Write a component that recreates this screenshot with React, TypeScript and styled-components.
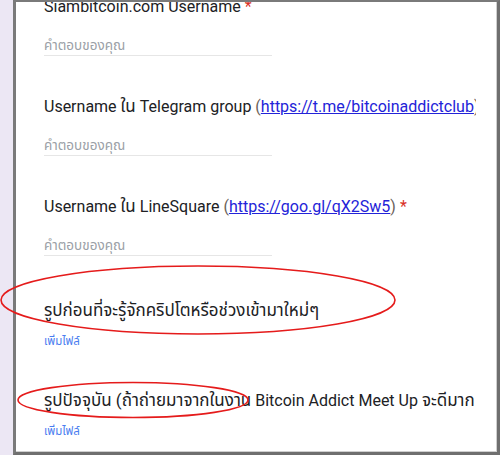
import React from "react";
import styled, { createGlobalStyle } from "styled-components";

const Global = createGlobalStyle`
  html, body {
    margin: 0;
    padding: 0;
    height: 455px;
    overflow: hidden;
    background: #ece7f4;
    font-family: Roboto, "Noto Sans", "Noto Sans Thai", sans-serif;
  }
`;

const Page = styled.div`
  position: relative;
  width: 500px;
  height: 455px;
  padding-left: 13px;
  box-sizing: border-box;
`;

const Card = styled.div`
  height: 455px;
  box-sizing: border-box;
  background: #fff;
  border-left: 3px solid #7a7a7a;
  border-top: 2px solid #7a7a7a;
  border-right: 3px solid #6f6f6f;
  border-bottom: 3px solid #6f6f6f;
  box-shadow: inset -1px -1px 0 #cfcfcf;
  overflow: hidden;
  padding-left: 28px;
`;

const Content = styled.div`
  width: 432px;
  height: 100%;
  overflow: hidden;
  display: flex;
  flex-direction: column;
`;

const Block = styled.div<{ $gap: number }>`
  display: flex;
  flex-direction: column;
  align-items: flex-start;
  margin-top: ${(p) => p.$gap}px;
`;

const Title = styled.div`
  font-size: 16px;
  line-height: 24px;
  height: 24px;
  color: #202124;
  white-space: nowrap;
`;

const Th = styled.span`
  font-size: 17px;
  line-height: 16px;
`;

const Paren = styled.span`
  color: #6b6158;
`;

const Link = styled.a`
  color: #2323d8;
  text-decoration: underline;
`;

const Star = styled.span`
  color: #d93025;
`;

const Answer = styled.div`
  margin-top: 18px;
  width: 228px;
  font-size: 13.5px;
  line-height: 16px;
  height: 16px;
  color: #9aa0a6;
  padding-bottom: 2px;
  border-bottom: 1px solid #e6e6e6;
`;

const AddFile = styled.div`
  margin-top: 11px;
  font-size: 11.5px;
  line-height: 14px;
  height: 14px;
  color: #4a7df0;
`;

const Marks = styled.svg`
  position: absolute;
  left: 0;
  top: 0;
  pointer-events: none;
`;

export default function App() {
  return (
    <>
      <Global />
      <Page>
        <Card>
          <Content>
            <Block $gap={-7}>
              <Title>
                Siambitcoin.com Username <Star>*</Star>
              </Title>
              <Answer>คำตอบของคุณ</Answer>
            </Block>
            <Block $gap={39}>
              <Title>
                Username <Th>ใน</Th> Telegram group <Paren>(</Paren>
                <Link>https://t.me/bitcoinaddictclub</Link>
                <Paren>)</Paren>
              </Title>
              <Answer>คำตอบของคุณ</Answer>
            </Block>
            <Block $gap={39}>
              <Title>
                Username <Th>ใน</Th> LineSquare <Paren>(</Paren>
                <Link>https://goo.gl/qX2Sw5</Link>
                <Paren>)</Paren> <Star>*</Star>
              </Title>
              <Answer>คำตอบของคุณ</Answer>
            </Block>
            <Block $gap={43}>
              <Title>
                <Th>รูปก่อนที่จะรู้จักคริปโตหรือช่วงเข้ามาใหม่ๆ</Th>
              </Title>
              <AddFile>เพิ่มไฟล์</AddFile>
            </Block>
            <Block $gap={41}>
              <Title>
                <Th>รูปปัจจุบัน (ถ้าถ่ายมาจากในงาน</Th> Bitcoin Addict Meet Up <Th>จะดีมาก</Th>
              </Title>
              <AddFile>เพิ่มไฟล์</AddFile>
            </Block>
          </Content>
        </Card>
        <Marks width="500" height="455" viewBox="0 0 500 455">
          <ellipse cx="198" cy="300" rx="197" ry="34" fill="none" stroke="#e51b1b" strokeWidth="1.6" />
          <ellipse cx="133" cy="400" rx="115" ry="17.5" fill="none" stroke="#e51b1b" strokeWidth="1.6" />
        </Marks>
      </Page>
    </>
  );
}
